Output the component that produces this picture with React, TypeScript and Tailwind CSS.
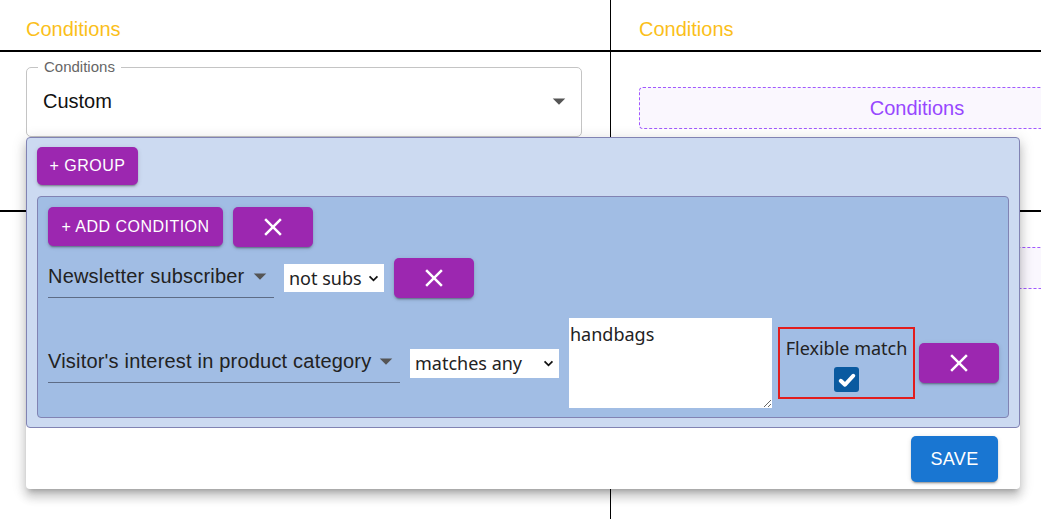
import React from "react";

// MUI-style icons
const CloseIcon = () => (
    <svg viewBox="0 0 24 24" className="w-[30px] h-[30px] fill-white">
        <path d="M19 6.41 17.59 5 12 10.59 6.41 5 5 6.41 10.59 12 5 17.59 6.41 19 12 13.41 17.59 19 19 17.59 13.41 12z" />
    </svg>
);

const ArrowDrop = () => (
    <svg viewBox="0 0 24 24" className="w-[30px] h-[30px] shrink-0 fill-[#555]">
        <path d="M7 10l5 5 5-5z" />
    </svg>
);

const Chevron = () => (
    <svg viewBox="0 0 12 8" className="w-[11px] h-[7px]">
        <path d="M1.5 1.5 6 6 10.5 1.5" fill="none" stroke="#111" strokeWidth="2" />
    </svg>
);

const btnShadow =
    "shadow-[0px_3px_1px_-2px_rgba(0,0,0,0.2),0px_2px_2px_0px_rgba(0,0,0,0.14),0px_1px_5px_0px_rgba(0,0,0,0.12)]";

const RemoveButton = () => (
    <button className={`w-[80px] h-[40px] rounded-[5px] bg-[#9c27b0] flex items-center justify-center ${btnShadow}`}>
        <CloseIcon />
    </button>
);

// 밑줄형 셀렉트 (MUI standard)
const FieldSelect = ({ label, width }: { label: string; width: string }) => (
    <div className={`${width} shrink-0 h-[40px] pb-[3px] flex items-center justify-between border-b border-[#5d6c86] text-[20px] tracking-[0.01em] text-[#222]`}>
        <span className="whitespace-nowrap">{label}</span>
        <ArrowDrop />
    </div>
);

// 네이티브 셀렉트 모양
const NativeSelect = ({ value, width, height }: { value: string; width: string; height: string }) => (
    <div className={`${width} ${height} bg-white flex items-center justify-between pl-[5px] pr-[5px] font-['Noto_Sans',sans-serif] text-[18px] text-[#222]`}>
        <span className="whitespace-nowrap">{value}</span>
        <Chevron />
    </div>
);

const App: React.FC = () => {
    return (
        <div className="relative h-[519px] w-full overflow-hidden bg-white font-['Liberation_Sans',Arial,sans-serif]">
            <div className="grid grid-cols-[611px_1fr] h-full">
                {/* 왼쪽 */}
                <div className="border-r border-black flex flex-col">
                    <div className="h-[52px] border-b-2 border-black pl-[26px] pt-[8px] flex items-center text-[20px] text-[#fbbf1a]">
                        Conditions
                    </div>
                    <div className="h-[160px] border-b-2 border-black pl-[26px] pt-[15px]">
                        <div className="relative w-[556px] h-[70px] border border-[#c4c4c4] rounded-[5px] pl-[16px] pr-[7px] pb-[2px] flex items-center justify-between">
                            <span className="absolute left-[11px] top-[-11px] px-[6px] bg-white text-[15px] leading-[20px] text-[#666]">
                                Conditions
                            </span>
                            <span className="text-[20px] text-[#111]">Custom</span>
                            <ArrowDrop />
                        </div>
                    </div>
                    <div className="flex-1" />
                </div>

                {/* 오른쪽 */}
                <div className="flex flex-col">
                    <div className="h-[52px] border-b-2 border-black pl-[28px] pt-[8px] flex items-center text-[20px] text-[#fbbf1a]">
                        Conditions
                    </div>
                    <div className="h-[160px] border-b-2 border-black pl-[28px] pt-[35px]">
                        <div className="w-[556px] h-[42px] shrink-0 border border-dashed border-[#a259ff] bg-[#faf7fe] rounded-[4px] flex items-center justify-center text-[20px] text-[#9747ff]">
                            Conditions
                        </div>
                    </div>
                    <div className="flex-1 pl-[28px] pt-[35px]">
                        <div className="w-[556px] h-[42px] border border-dashed border-[#a259ff] bg-[#faf7fe] rounded-[4px] flex items-center justify-center text-[20px] text-[#9747ff]">
                            Conditions
                        </div>
                    </div>
                </div>
            </div>

            {/* 팝오버 */}
            <div className="absolute left-[26px] top-[137px] w-[994px] h-[352px] bg-white rounded-[4px] shadow-[0px_5px_5px_-3px_rgba(0,0,0,0.2),0px_8px_10px_1px_rgba(0,0,0,0.14),0px_3px_14px_2px_rgba(0,0,0,0.12)]">
                <div className="h-[291px] border border-[#8183b3] bg-[#ccdaf1] rounded-[4px] pt-[9px] px-[10px]">
                    <button className={`h-[38px] w-[101px] rounded-[5px] bg-[#9c27b0] text-white text-[16px] tracking-[0.03em] ${btnShadow}`}>
                        + GROUP
                    </button>
                    <div className="mt-[11px] h-[222px] border border-[#8183b3] bg-[#a1bde4] rounded-[4px] pt-[10px] pl-[10px]">
                        <div className="flex gap-[10px]">
                            <button className={`h-[39px] w-[175px] rounded-[5px] bg-[#9c27b0] text-white text-[16px] tracking-[0.03em] ${btnShadow}`}>
                                + ADD CONDITION
                            </button>
                            <RemoveButton />
                        </div>

                        <div className="mt-[11px] h-[40px] flex items-center gap-[10px]">
                            <FieldSelect label="Newsletter subscriber" width="w-[226px]" />
                            <NativeSelect value="not subs" width="w-[100px]" height="h-[28px]" />
                            <RemoveButton />
                        </div>

                        <div className="mt-[20px] h-[90px] flex items-center">
                            <FieldSelect label="Visitor's interest in product category" width="w-[352px]" />
                            <div className="ml-[10px]">
                                <NativeSelect value="matches any" width="w-[149px]" height="h-[29px]" />
                            </div>
                            <textarea
                                readOnly
                                defaultValue="handbags"
                                className="ml-[10px] w-[203px] h-[90px] bg-white pl-[1px] pt-[2px] font-['Noto_Sans',sans-serif] text-[18px] leading-[28px] text-[#222] outline-none"
                            />
                            <div className="ml-[6px] w-[137px] h-[72px] border-2 border-[#e21c1c] flex flex-col items-center pt-[7px]">
                                <span className="font-['Noto_Sans',sans-serif] text-[18px] leading-[24px] text-[#222]">Flexible match</span>
                                <div className="mt-[7px] w-[25px] h-[25px] rounded-[3px] bg-[#0a5aa0] flex items-center justify-center">
                                    <svg viewBox="0 0 16 16" className="w-[20px] h-[20px]">
                                        <path d="M3 8.6 6.4 11.8 13 4.6" fill="none" stroke="white" strokeWidth="3.2" strokeLinecap="round" strokeLinejoin="round" />
                                    </svg>
                                </div>
                            </div>
                            <div className="ml-[4px]">
                                <RemoveButton />
                            </div>
                        </div>
                    </div>
                </div>
                <div className="flex justify-end pr-[22px] pt-[8px]">
                    <button className={`w-[87px] h-[46px] rounded-[5px] bg-[#1976d2] text-white text-[18px] tracking-[0.02em] ${btnShadow}`}>
                        SAVE
                    </button>
                </div>
            </div>
        </div>
    );
};

export default App;
